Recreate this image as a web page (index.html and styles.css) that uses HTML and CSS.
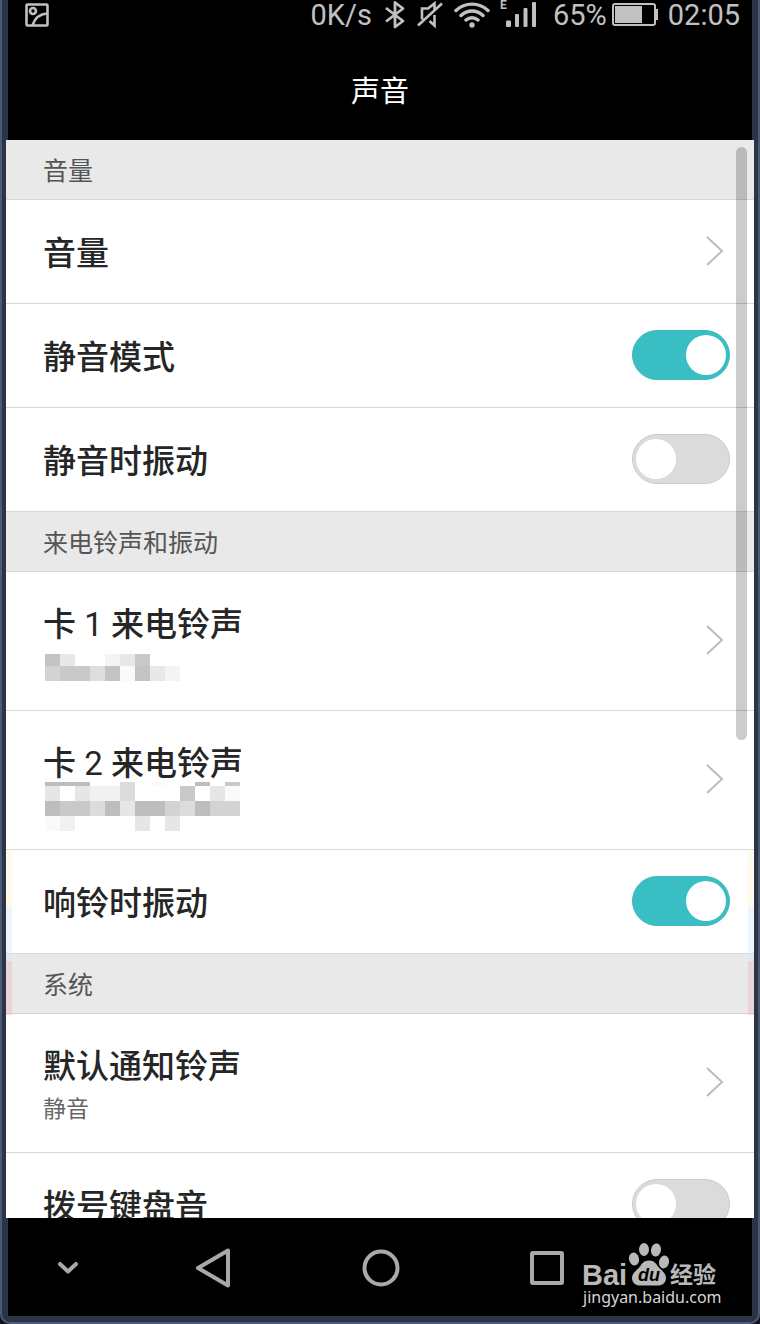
FILE: index.html
```html
<!DOCTYPE html>
<html lang="zh-CN">
<head>
    <meta charset="UTF-8">
    <meta name="viewport" content="width=device-width, initial-scale=1.0">
    <title>声音</title>
    <link rel="stylesheet" href="styles.css">
</head>
<body>
    <div class="phone">
        <header class="top">
            <div class="statusBar">
                <svg class="shot" width="24" height="24" viewBox="0 0 24 24" fill="none" stroke="currentColor" stroke-width="2.6">
                    <rect x="1.500" y="1.500" width="21" height="21" rx="1"/>
                    <circle cx="8" cy="8" r="3"/>
                    <path d="M7.500 22C10 15 14 11 22 10.500"/>
                </svg>
                <span>0K/s</span>
                <svg width="24" height="30" viewBox="0 0 24 30" fill="none" stroke="currentColor" stroke-width="2.8" stroke-linejoin="round">
                    <path d="M4 8l17 13-8 6V2.500l8 6L4 21.500"/>
                </svg>
                <svg width="28" height="30" viewBox="0 0 28 30" fill="none" stroke="currentColor" stroke-width="2.6">
                    <path d="M6 19.500V8.500h6L18.500 3.500v6M18.500 15v10.500l-5-4.500M2 25.500L26 3.500"/>
                </svg>
                <svg width="36" height="30" viewBox="0 0 36 30" fill="none" stroke="currentColor" stroke-width="3.4" stroke-linecap="round">
                    <path d="M2 10.500C11 2 25 2 34 10.500M7 15.500c6.500-6 15.500-6 22 0M12 20c3.500-3 8.500-3 12 0"/>
                    <circle cx="18" cy="25" r="2.700" fill="currentColor" stroke="none"/>
                </svg>
                <svg width="43" height="30" viewBox="0 0 43 30" fill="currentColor">
                    <text class="netType" x="0" y="9">E</text>
                    <rect x="6" y="20.500" width="5" height="6.500" rx="1"/>
                    <rect x="15" y="14" width="4" height="13" rx="1"/>
                    <rect x="23.500" y="8" width="4" height="19" rx="1"/>
                    <rect x="32" y="2" width="4" height="25" rx="1"/>
                </svg>
                <div class="battery">
                    <span>65%</span>
                    <svg width="46" height="24" viewBox="0 0 46 24" fill="currentColor">
                        <rect x="1" y="1" width="42" height="21" rx="2" fill="none" stroke="currentColor" stroke-width="2"/>
                        <rect x="3" y="3" width="27" height="17"/>
                        <path d="M43 6h3v11h-3z"/>
                    </svg>
                </div>
                <time>02:05</time>
            </div>
            <h1>声音</h1>
        </header>

        <main class="settings">
            <h2>音量</h2>
            <a class="row" href="#volume">
                <span class="name">音量</span>
                <svg class="arrow" viewBox="0 0 24 32"><path d="M1 2l15 14L1 30"/></svg>
            </a>
            <label class="row">
                <span class="name">静音模式</span>
                <input class="switch" type="checkbox" checked>
            </label>
            <label class="row">
                <span class="name">静音时振动</span>
                <input class="switch" type="checkbox">
            </label>

            <h2>来电铃声和振动</h2>
            <a class="row tall" href="#sim1">
                <span class="text">
                    <span class="name">卡 <span class="num">1</span> 来电铃声</span>
                    <!-- ringtone names are hidden behind a mosaic -->
                    <svg class="mosaic" viewBox="0 0 200 50">
                        <path fill="#c3c3c3" d="M0 11h15v12H0zM60 23h15v15H60zM90 23h15v15H90z"/>
                        <path fill="#c9c9c9" d="M90 11h15v12H90zM15 23h30v15H15z"/>
                        <path fill="#d3d3d3" d="M0 23h15v15H0z"/>
                        <path fill="#dedede" d="M45 23h15v15H45z"/>
                        <path fill="#e8e8e8" d="M15 11h15v12H15zM75 11h15v12H75zM105 23h15v15h-15z"/>
                        <path fill="#f4f4f4" d="M60 11h15v12H60zM120 23h15v15h-15z"/>
                        <path fill="#fafafa" d="M75 23h15v15H75z"/>
                    </svg>
                </span>
                <svg class="arrow" viewBox="0 0 24 32"><path d="M1 2l15 14L1 30"/></svg>
            </a>
            <a class="row tall" href="#sim2">
                <span class="text">
                    <span class="name">卡 <span class="num">2</span> 来电铃声</span>
                    <svg class="mosaic" viewBox="0 0 200 50">
                        <path fill="#bdbdbd" d="M0 19h15v15H0zM60 19h15v15H60zM90 19h30v15H90zM150 19h15v15h-15zM0 0h45v4H0zM150 0h15v4h-15z"/>
                        <path fill="#c9c9c9" d="M15 19h30v15H15zM180 0h15v4h-15zM135 4h15v15h-15z"/>
                        <path fill="#d3d3d3" d="M120 19h15v15h-15zM165 19h30v15h-30z"/>
                        <path fill="#dcdcdc" d="M45 19h15v15H45zM135 19h15v15h-15zM75 0h15v19H75z"/>
                        <path fill="#e6e6e6" d="M0 4h15v15H0zM30 4h15v15H30zM165 4h15v15h-15zM75 19h15v15H75zM90 34h15v15H90zM120 34h15v15h-15z"/>
                        <path fill="#f1f1f1" d="M45 4h30v15H45zM15 34h15v15H15z"/>
                        <path fill="#fafafa" d="M0 34h15v15H0zM105 0h15v4h-15zM180 4h15v15h-15z"/>
                    </svg>
                </span>
                <svg class="arrow" viewBox="0 0 24 32"><path d="M1 2l15 14L1 30"/></svg>
            </a>
            <label class="row">
                <span class="name">响铃时振动</span>
                <input class="switch" type="checkbox" checked>
            </label>

            <h2>系统</h2>
            <a class="row tall" href="#notify">
                <span class="text">
                    <span class="name">默认通知铃声</span>
                    <span class="sub">静音</span>
                </span>
                <svg class="arrow" viewBox="0 0 24 32"><path d="M1 2l15 14L1 30"/></svg>
            </a>
            <label class="row">
                <span class="name">拨号键盘音</span>
                <input class="switch" type="checkbox">
            </label>

            <div class="tint left"></div>
            <div class="tint right"></div>
            <div class="scrollbar"></div>
        </main>

        <nav class="navBar">
            <button type="button" aria-label="隐藏">
                <svg width="20" height="12" viewBox="0 0 20 12"><path d="M2 2l8 7.500L18 2"/></svg>
            </button>
            <button type="button" aria-label="返回">
                <svg width="36" height="42" viewBox="0 0 36 42"><path d="M3 21L33 3.500v35z"/></svg>
            </button>
            <button type="button" aria-label="主页">
                <svg width="40" height="40" viewBox="0 0 40 40"><circle cx="20" cy="20" r="16.500"/></svg>
            </button>
            <button type="button" aria-label="最近任务">
                <svg width="36" height="36" viewBox="0 0 36 36"><rect x="3" y="3" width="30" height="30" rx="1"/></svg>
            </button>
            <svg class="watermark" width="144" height="70" viewBox="0 0 144 70">
                <text class="bai" x="2" y="45">Bai</text>
                <g>
                    <ellipse cx="54" cy="19" rx="5" ry="6.500" transform="rotate(-12 54 19)"/>
                    <ellipse cx="64" cy="9.500" rx="5" ry="6.500"/>
                    <ellipse cx="76" cy="10" rx="5" ry="6.500" transform="rotate(10 76 10)"/>
                    <ellipse cx="84" cy="22" rx="5" ry="6.500" transform="rotate(14 84 22)"/>
                    <path d="M69 20.500c-5 0-7 3-9 6-3 4-8 6-8 11.500 0 5 4 7.500 8 7.500h18c4 0 8-2.500 8-7.500 0-5.500-5-7.500-8-11.500-2-3-4-6-9-6z"/>
                </g>
                <text class="du" x="58" y="41">du</text>
                <text class="jing" x="90" y="43">经验</text>
                <text class="site" x="3" y="63">jingyan.baidu.com</text>
            </svg>
        </nav>
    </div>
</body>
</html>
```
FILE: styles.css
```css
*{
    box-sizing: border-box;
}

body{
    margin: 0;
    background-color: #10131c;
    font-family: Roboto, "Noto Sans CJK SC", sans-serif;
    color: #262626;
}

/* phone body around the screen */
.phone{
    display: flex;
    flex-direction: column;
    height: 100vh;
    padding: 0 4px 6px 4px;
    border: 2px solid #4c5a75;
    border-top: none;
    border-radius: 0 0 10px 10px;
    background-color: #2c3448;
}

.top{
    height: 140px;
    margin: 0 2px;
    background-color: #000;
    flex-shrink: 0;
}

.statusBar{
    display: flex;
    align-items: center;
    justify-content: flex-end;
    gap: 10px;
    height: 30px;
    padding: 0 12px 0 17px;
    color: #c2c0c0;
    font-size: 29px;
    line-height: 30px;
}

.shot{
    margin-right: auto;
}

.netType{
    font-size: 12px;
    font-weight: bold;
}

.battery{
    display: flex;
    align-items: center;
    gap: 5px;
}

h1{
    margin: 0;
    padding-top: 42px;
    color: #fff;
    font-size: 29px;
    font-weight: normal;
    line-height: 40px;
    text-align: center;
}

.settings{
    position: relative;
    flex: 1;
    min-height: 0;
    overflow: hidden;
    background-color: #fff;
}

h2{
    margin: 0;
    padding: 14px 37px 9px 37px;
    border-bottom: 1px solid #d6d6d6;
    background-color: #e9e9e9;
    color: #555;
    font-size: 25px;
    font-weight: normal;
    line-height: 36px;
}

.row{
    display: flex;
    align-items: center;
    justify-content: space-between;
    min-height: 104px;
    padding: 0 24px 2px 37px;
    border-bottom: 1px solid #d8d8d8;
    color: inherit;
    text-decoration: none;
}

.tall{
    min-height: 139px;
}

.text{
    display: flex;
    flex-direction: column;
    align-self: flex-start;
    padding-top: 27px;
}

.name{
    padding-top: 6px;
    font-size: 33px;
    font-weight: 500;
    line-height: 40px;
}

.num{
    font-weight: normal;
}

.sub{
    margin-top: 8px;
    color: #666;
    font-size: 23px;
    line-height: 30px;
}

.mosaic{
    width: 200px;
    height: 50px;
    margin-top: -2px;
    margin-left: 2px;
    shape-rendering: crispEdges;
}

.arrow{
    width: 24px;
    height: 32px;
    fill: none;
    stroke: #bcbcbc;
    stroke-width: 2;
}

.switch{
    appearance: none;
    width: 98px;
    height: 50px;
    margin: 0;
    padding: 4px 3px;
    border: 1px solid #cbcbcb;
    border-radius: 25px;
    background-color: #dbdbdb;
    cursor: pointer;
}

.switch::before{
    content: "";
    display: block;
    width: 40px;
    height: 40px;
    border-radius: 50%;
    background-color: #fff;
}

.switch:checked{
    border-color: #45b8bb;
    background-color: #38bec3;
}

.switch:checked::before{
    margin-left: auto;
}

.scrollbar{
    position: absolute;
    top: 7px;
    right: 7px;
    width: 11px;
    height: 55%;
    border-radius: 6px;
    background-color: rgba(0, 0, 0, 0.2);
}

/* faint coloured strips on both screen edges */
.tint{
    position: absolute;
    top: 711px;
    width: 6px;
    height: 164px;
    background: linear-gradient(#fff3c8 0 34%, #cfe8f6 34% 67%, #e8b4c0 67%);
    opacity: 0.4;
}

.left{
    left: 0;
}

.right{
    right: 0;
}

.navBar{
    position: relative;
    display: grid;
    grid-template-columns: 120fr 170fr 166fr 166fr 122fr;
    height: 98px;
    margin: 0 2px;
    background-color: #000;
    flex-shrink: 0;
}

button{
    display: flex;
    align-items: center;
    justify-content: center;
    padding: 2px 0 0 0;
    border: none;
    background: none;
    cursor: pointer;
}

button svg{
    fill: none;
    stroke: #a9a9a9;
    stroke-width: 4;
    stroke-linejoin: round;
    stroke-linecap: round;
}

.watermark{
    position: absolute;
    right: 28px;
    bottom: 6px;
    fill: #b9b9b9;
}

.bai{
    font: bold 29px "Liberation Sans", Arial, sans-serif;
}

.du{
    font: italic bold 18px "Liberation Sans", Arial, sans-serif;
    fill: #000;
}

.jing{
    font: bold 23px "Noto Sans CJK SC", sans-serif;
}

.site{
    font: 16px "Noto Sans", sans-serif;
    fill: #d6d6d6;
}
```
